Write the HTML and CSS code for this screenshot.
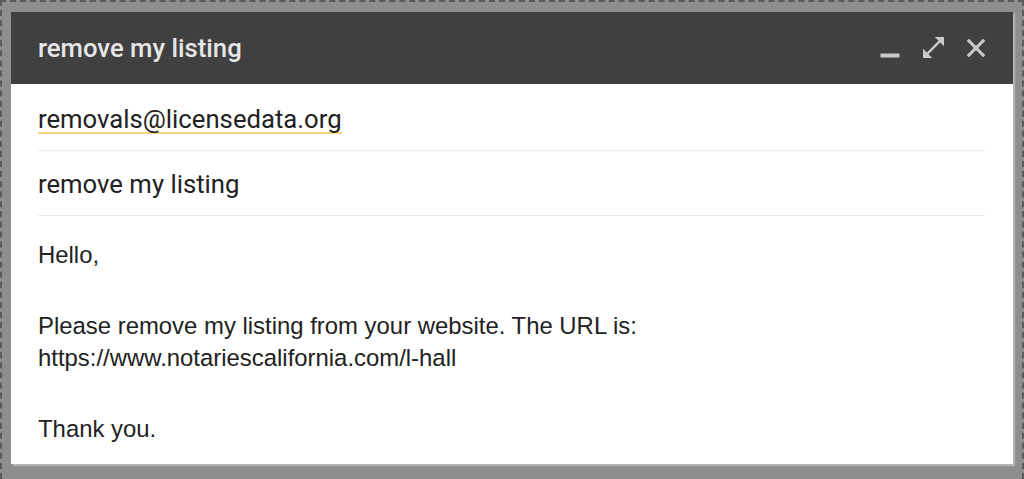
FILE: index.html
```html
<!DOCTYPE html>
<html>
<head>
<meta charset="utf-8">
<link rel="stylesheet" href="styles.css">
</head>
<body>
<div class="frame">
  <div class="window">
    <div class="header">
      <div class="title">remove my listing</div>
      <div class="controls">
        <svg class="ic-min" width="20" height="21" viewBox="0 0 20 21"><rect x="0.5" y="16.5" width="19" height="4" fill="#c9c9c9"/></svg>
        <svg class="ic-exp" width="21" height="21" viewBox="3 3 18 18"><path d="M21 11V3h-8l3.29 3.29-10 10L3 13v8h8l-3.29-3.29 10-10z" fill="#c9c9c9"/></svg>
        <svg class="ic-close" width="18" height="18" viewBox="5 5 14 14"><path d="M19 6.41L17.59 5 12 10.59 6.41 5 5 6.41 10.59 12 5 17.59 6.41 19 12 13.41 17.59 19 19 17.59 13.41 12z" fill="#c9c9c9" stroke="#c9c9c9" stroke-width="0.5"/></svg>
      </div>
    </div>
    <div class="content">
      <div class="field field-to"><span class="recipient">removals@licensedata.org</span></div>
      <div class="field field-subject">remove my listing</div>
      <div class="message">
        <p>Hello,</p>
        <p>Please remove my listing from your website. The URL is:<br>https://www.notariescalifornia.com/l-hall</p>
        <p>Thank you.</p>
      </div>
    </div>
  </div>
</div>
</body>
</html>
```
FILE: styles.css
```css
html, body {
  margin: 0;
  padding: 0;
}
body {
  width: 1024px;
  height: 479px;
  overflow: hidden;
  background: #8e8e8e;
}
.frame {
  box-sizing: border-box;
  width: 1024px;
  height: 479px;
  background: #8e8e8e;
  border-top: 2px dashed #5a5a5a;
  border-left: 2px dashed #5a5a5a;
  border-right: 2px dashed #5a5a5a;
  padding: 10px 9px 0 9px;
}
.window {
  width: 1002px;
  height: 452px;
  display: flex;
  flex-direction: column;
  overflow: hidden;
  box-shadow: 2px 2px 1px #b4b4b4;
}
.header {
  height: 72px;
  background: #404040;
  display: flex;
  align-items: center;
  justify-content: space-between;
  padding: 0 28px 0 27px;
  flex: none;
}
.title {
  font-family: Roboto, "Liberation Sans", sans-serif;
  font-weight: 500;
  font-size: 25.7px;
  color: #e6e6e6;
}
.controls {
  display: flex;
  align-items: center;
  gap: 23px;
  margin-top: -1px;
}
.controls svg {
  display: block;
}
.content {
  flex: 1;
  min-height: 0;
  background: #ffffff;
  padding: 0 28px 0 27px;
  display: flex;
  flex-direction: column;
}
.field {
  font-family: Roboto, "Liberation Sans", sans-serif;
  font-size: 25.7px;
  color: #222222;
  border-bottom: 1px solid #ececec;
  display: flex;
  align-items: center;
  flex: none;
  box-sizing: border-box;
}
.field-to {
  height: 67px;
  padding-top: 2px;
}
.recipient {
  display: inline-block;
  line-height: 26px;
  border-bottom: 2px solid #f6d57c;
  margin-top: 4px;
}
.field-subject {
  height: 65px;
  padding-top: 2px;
}
.message {
  padding-top: 23px;
  font-family: "Liberation Sans", Arial, sans-serif;
  font-size: 23.9px;
  line-height: 32px;
  color: #222222;
}
.message p {
  margin: 0 0 39px 0;
}
.message p:last-child {
  margin-bottom: 0;
}
```
